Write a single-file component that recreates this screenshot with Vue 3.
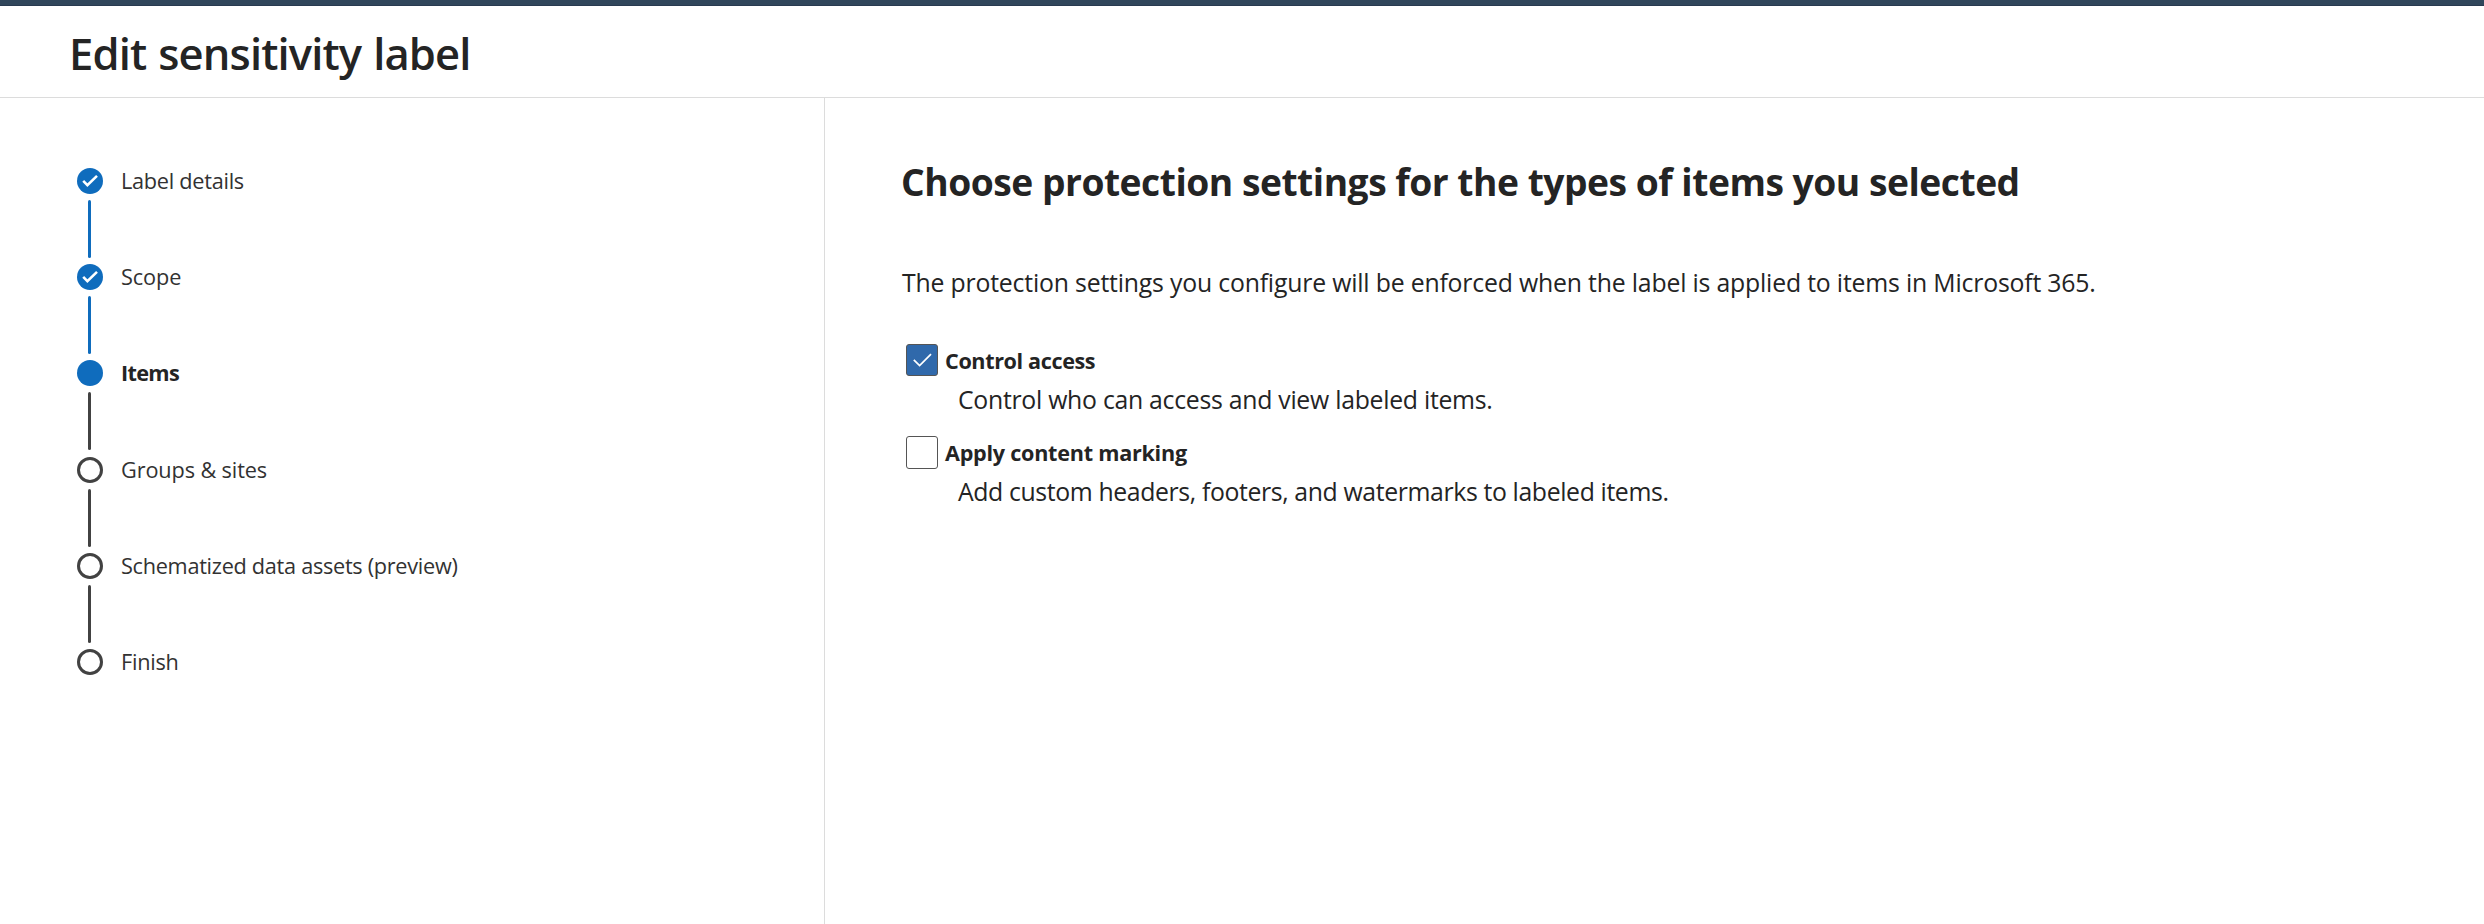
<script setup>
const steps = [
  { label: 'Label details', state: 'done', tracking: -0.27 },
  { label: 'Scope', state: 'done', tracking: -0.1 },
  { label: 'Items', state: 'current', tracking: -0.7 },
  { label: 'Groups & sites', state: 'todo', tracking: -0.12 },
  { label: 'Schematized data assets (preview)', state: 'todo', tracking: -0.29 },
  { label: 'Finish', state: 'todo', tracking: -0.25 },
]

const options = [
  {
    title: 'Control access',
    titleTracking: -0.38,
    text: 'Control who can access and view labeled items.',
    textTracking: -0.27,
    checked: true,
  },
  {
    title: 'Apply content marking',
    titleTracking: -0.25,
    text: 'Add custom headers, footers, and watermarks to labeled items.',
    textTracking: -0.37,
    checked: false,
  },
]
</script>

<template>
  <div class="page">
    <div class="top-bar"></div>
    <header class="header">
      <h1 class="title">Edit sensitivity label</h1>
    </header>
    <div class="body">
      <nav class="sidebar">
        <ol class="steps">
          <li v-for="step in steps" :key="step.label" class="step" :class="step.state">
            <div class="rail">
              <span class="marker">
                <svg v-if="step.state === 'done'" width="26" height="26" viewBox="0 0 26 26">
                  <path d="M6.2 12.9 L10.4 17.1 L20 7.9" fill="none" stroke="#fff" stroke-width="2.6" />
                </svg>
              </span>
              <span class="line"></span>
            </div>
            <span class="step-label" :style="{ letterSpacing: step.tracking + 'px' }">{{ step.label }}</span>
          </li>
        </ol>
      </nav>
      <main class="content">
        <h2 class="heading">Choose protection settings for the types of items you selected</h2>
        <p class="intro">The protection settings you configure will be enforced when the label is applied to items in Microsoft 365.</p>
        <div class="options">
          <div v-for="option in options" :key="option.title" class="option">
            <label class="option-row">
              <span class="checkbox" :class="{ checked: option.checked }">
                <svg v-if="option.checked" width="32" height="32" viewBox="0 0 32 32">
                  <path d="M7.8 15.8 L13.6 21.6 L25 10.2" fill="none" stroke="#fff" stroke-width="1.7" />
                </svg>
              </span>
              <span class="option-title" :style="{ letterSpacing: option.titleTracking + 'px' }">{{ option.title }}</span>
            </label>
            <p class="option-text" :style="{ letterSpacing: option.textTracking + 'px' }">{{ option.text }}</p>
          </div>
        </div>
      </main>
    </div>
  </div>
</template>

<style>
body {
  background: #fff;
}
</style>

<style scoped>
.page {
  display: flex;
  flex-direction: column;
  height: 924px;
  overflow: hidden;
  background: #fff;
  color: #242424;
  font-family: "Segoe UI", "Open Sans", "Noto Sans", sans-serif;
  white-space: nowrap;
}
h1, h2, p, ol {
  margin: 0;
  padding: 0;
}
.top-bar {
  height: 6px;
  flex: none;
  box-sizing: border-box;
  background: #30465b;
  border-bottom: 1px solid #283a50;
}
.header {
  flex: none;
  box-sizing: border-box;
  height: 92px;
  padding: 18px 0 0 69px;
  border-bottom: 1px solid #dcdcdc;
}
.title {
  font-size: 43.5px;
  line-height: 60px;
  font-weight: 600;
  letter-spacing: -0.85px;
  word-spacing: 1.5px;
}
.body {
  flex: 1;
  display: flex;
}
.sidebar {
  box-sizing: border-box;
  width: 825px;
  padding: 70px 0 0 77px;
  border-right: 1px solid #dcdcdc;
}
.steps {
  list-style: none;
}
.step {
  display: flex;
  gap: 18px;
  height: 96.2px;
  color: #323232;
}
.rail {
  display: flex;
  flex-direction: column;
  align-items: flex-start;
  width: 26px;
}
.marker {
  box-sizing: border-box;
  width: 26px;
  height: 26px;
  border: 3px solid #424242;
  border-radius: 50%;
}
.marker svg {
  display: block;
}
.done .marker,
.current .marker {
  border: 0;
  background: #0f6cbd;
}
.line {
  width: 3px;
  height: 58px;
  margin: 6px 0 0 11px;
  border-radius: 1.5px;
  background: #424242;
}
.done .line {
  background: #0f6cbd;
}
.step:last-child .line {
  display: none;
}
.step-label {
  font-size: 21.7px;
  line-height: 26px;
}
.current .step-label {
  font-weight: 700;
  color: #242424;
}
.content {
  padding: 59px 0 0 76px;
}
.heading {
  font-size: 37.2px;
  line-height: 50px;
  font-weight: 700;
  letter-spacing: -0.48px;
}
.intro {
  margin: 57px 0 0 1px;
  font-size: 24.8px;
  line-height: 36px;
  letter-spacing: -0.183px;
}
.options {
  display: flex;
  flex-direction: column;
  gap: 20px;
  margin: 44px 0 0 5px;
}
.option-row {
  display: flex;
  align-items: flex-start;
  gap: 7px;
  height: 32px;
}
.checkbox {
  box-sizing: border-box;
  width: 32px;
  height: 33px;
  border: 1px solid #555;
  border-radius: 3px;
}
.checkbox.checked {
  height: 32px;
  background: #3069ab;
}
.checkbox svg {
  display: block;
  margin: -1px;
}
.option-title {
  padding-top: 1px;
  font-size: 21.6px;
  line-height: 32px;
  font-weight: 700;
}
.option-text {
  margin: 6px 0 0 52px;
  font-size: 24.8px;
  line-height: 34px;
}
</style>
